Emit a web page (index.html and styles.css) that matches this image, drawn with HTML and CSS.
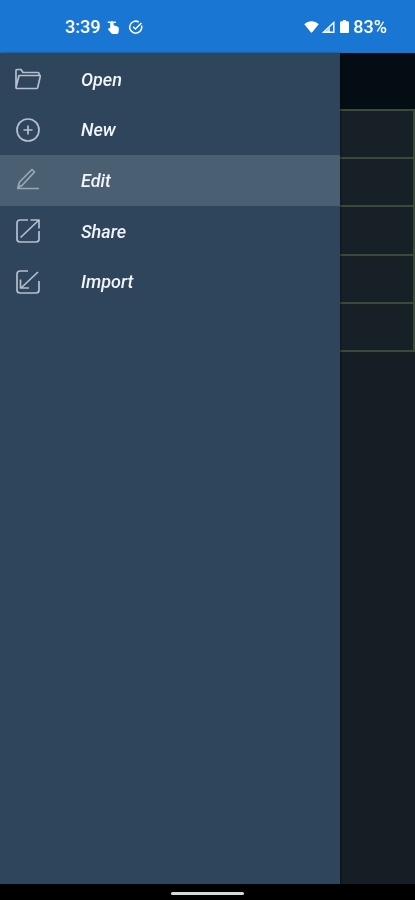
FILE: index.html
```html
<!DOCTYPE html>
<html lang="en">
<head>
<meta charset="utf-8">
<title>Drawer</title>
<link rel="stylesheet" href="styles.css">
</head>
<body>
<div class="screen">
  <header class="status">
    <div class="status-left">
      <span class="time">3:39</span>
      <svg class="ic-touch" viewBox="0 0 12 14" width="12" height="14"><path fill="#fff" d="M3.200 2.600a1.700 1.700 0 0 1 3.400 0V5.200l3.300 1c1.300.4 2.100 1.400 2 2.700l-.3 3c-.1 1.200-1 2.100-2.200 2.100H6c-.7 0-1.300-.3-1.700-.8L.8 9.300l1.100-1.100c.4-.4 1-.4 1.300-.1z"/><path fill="#fff" d="M.8 1.400h2.600v1.500H.8zM6.400 1.400h2.400v1.500H6.400z"/></svg>
      <svg class="ic-check" viewBox="0 0 14 14" width="14" height="14"><path fill="none" stroke="#fff" stroke-width="1.500" d="M12.500 5.500A6 6 0 1 1 9.800 2"/><path fill="none" stroke="#fff" stroke-width="1.500" d="M4.200 6.800l2.200 2.200 6-6"/></svg>
    </div>
    <div class="status-right">
      <svg viewBox="0 0 15 12" width="15" height="12"><path fill="#fff" d="M.3 3.300C4.200-.8 10.800-.8 14.700 3.300L8.200 11.300c-.4.500-1 .5-1.400 0z"/></svg>
      <svg class="ic-signal" viewBox="0 0 13 12" width="13" height="12"><path fill="none" stroke="#fff" stroke-width="1.400" d="M1.500 11.300L11.800 1.500v9.800z"/><path fill="#fff" d="M8 11.300V6l-5 5.300z" opacity=".75"/></svg>
      <svg class="ic-batt" viewBox="0 0 9 13" width="9" height="13"><path fill="#fff" d="M3 0h3v1.200h1.500c.8 0 1.500.6 1.500 1.400V12c0 .6-.5 1-1 1H1c-.5 0-1-.4-1-1V2.600c0-.8.7-1.400 1.500-1.400H3z"/></svg>
      <span class="batt">83%</span>
    </div>
  </header>
  <main class="body">
    <nav class="drawer">
      <a class="item">
        <svg class="icon" viewBox="0 0 26 22" width="26" height="22"><path d="M1 19.500V2.500c0-.6.4-1 1-1h4l2 3h15c.6 0 1 .4 1 1v2M1 19.500c0 .6.4 1 1 1h19.500c.6 0 1-.4 1.200-1L25.500 7.500H4z"/></svg>
        <span>Open</span>
      </a>
      <a class="item">
        <svg class="icon" viewBox="0 0 26 26" width="26" height="26"><circle cx="13" cy="13" r="11"/><path d="M13 8.500v9M8.500 13h9"/></svg>
        <span>New</span>
      </a>
      <a class="item active">
        <svg class="icon" viewBox="0 0 26 24" width="26" height="24"><path d="M2 20.500h22M3 19.500l1.500-5.500L17 1.500l2.500 2.500L7 17.500z"/></svg>
        <span>Edit</span>
      </a>
      <a class="item">
        <svg class="icon" viewBox="0 0 26 26" width="26" height="26"><path d="M13 2H5C3.200 2 2 3.200 2 5v16c0 1.800 1.200 3 3 3h16c1.800 0 3-1.200 3-3v-8M5.500 19.500L24 2M15.500 2H24v8.500"/></svg>
        <span>Share</span>
      </a>
      <a class="item">
        <svg class="icon" viewBox="0 0 26 26" width="26" height="26"><path d="M13 2H5C3.200 2 2 3.200 2 5v16c0 1.800 1.200 3 3 3h16c1.800 0 3-1.200 3-3V12M23 3L6 19M5.500 10.500V19H14"/></svg>
        <span>Import</span>
      </a>
    </nav>
    <section class="content">
      <div class="content-head"></div>
      <div class="cell"></div>
      <div class="cell"></div>
      <div class="cell"></div>
      <div class="cell"></div>
      <div class="cell"></div>
    </section>
  </main>
  <footer class="navbar"><div class="pill"></div></footer>
</div>
</body>
</html>
```
FILE: styles.css
```css
* { box-sizing: border-box; }
html, body { margin: 0; padding: 0; background: #000; }
.screen {
  width: 415px;
  height: 900px;
  display: flex;
  flex-direction: column;
  overflow: hidden;
  font-family: Roboto, "Liberation Sans", sans-serif;
  filter: blur(.5px);
}
.status {
  height: 53px;
  flex: none;
  background: #1976d2;
  color: #fff;
  display: flex;
  justify-content: space-between;
  align-items: center;
  padding: 0 28px 0 65px;
}
.status-left, .status-right { display: flex; align-items: center; }
.time, .batt { font-size: 18px; font-weight: 500; }
.ic-touch { margin-left: 7px; }
.ic-check { margin-left: 10px; }
.ic-signal { margin-left: 3px; }
.ic-batt { margin-left: 5px; }
.batt { margin-left: 4px; }
.body { flex: 1; display: flex; min-height: 0; }
.drawer {
  width: 340px;
  flex: none;
  padding-top: 1px;
  background: #2f455c;
  box-shadow: 1px 0 2px rgba(0, 0, 0, .4);
  position: relative;
}
.item {
  height: 50.600px;
  display: flex;
  align-items: center;
  color: #f2f5f8;
  font-size: 18px;
  font-style: italic;
  font-weight: 500;
}
.item span { margin-left: 40px; }
.item .icon {
  width: 26px;
  margin-left: 15px;
  fill: none;
  stroke: #b4c0cb;
  stroke-width: 1.700;
  stroke-linejoin: round;
}
.active { background: #4a5f72; }
.active .icon { stroke: #9aa8b4; }
.content {
  flex: 1;
  background: #151d25;
  display: flex;
  flex-direction: column;
}
.content-head { height: 56px; background: #050d14; }
.cell {
  height: 48.200px;
  background: #171f27;
  border-top: 2px solid #3a4b36;
  border-right: 2px solid #3a4b36;
}
.cell:last-child { height: 50px; border-bottom: 2px solid #3a4b36; }
.navbar {
  height: 16px;
  flex: none;
  background: #000;
  padding: 8px 0 0 171px;
}
.pill { width: 73px; height: 3px; background: #d8d8d8; border-radius: 2px; }
```
